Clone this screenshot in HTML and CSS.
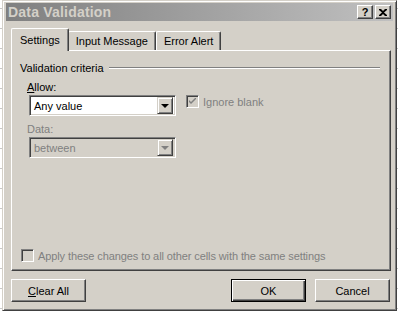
FILE: index.html
```html
<!DOCTYPE html>
<html lang="en">
<head>
    <meta charset="UTF-8">
    <title>Data Validation</title>
    <link rel="stylesheet" href="styles.css">
</head>
<body>
    <div class="dialog">
        <div class="titlebar">
            <span class="title">Data Validation</span>
            <div class="title-buttons">
                <span class="tbtn">?</span>
                <span class="tbtn">
                    <svg width="8" height="7" viewBox="0 0 8 7"><path d="M0 0h2l2 2 2-2h2v1L5 3.5 8 6v1H6L4 5 2 7H0V6l3-2.5L0 1z" fill="#000"/></svg>
                </span>
            </div>
        </div>

        <div class="tabs">
            <div class="tab active">Settings</div>
            <div class="tab">Input Message</div>
            <div class="tab">Error Alert</div>
        </div>

        <div class="panel">
            <div class="group-title">
                <span>Validation criteria</span>
                <span class="etch"></span>
            </div>

            <div class="field">
                <label class="lbl"><u>A</u>llow:</label>
                <div class="row">
                    <div class="combo">
                        <span class="combo-text">Any value</span>
                        <span class="drop"><span class="arrow"></span></span>
                    </div>
                    <div class="check disabled">
                        <span class="box checked">
                            <svg width="7" height="7" viewBox="0 0 7 7"><path d="M0 2l2 2 5-5v2L2 6 0 4z" fill="#808080"/></svg>
                        </span>
                        <span>Ignore blank</span>
                    </div>
                </div>
            </div>

            <div class="field">
                <label class="lbl disabled">Data:</label>
                <div class="combo off">
                    <span class="combo-text">between</span>
                    <span class="drop"><span class="arrow"></span></span>
                </div>
            </div>

            <div class="spacer"></div>

            <div class="check disabled apply">
                <span class="box"></span>
                <span>Apply these changes to all other cells with the same settings</span>
            </div>
        </div>

        <div class="footer">
            <button class="btn"><u>C</u>lear All</button>
            <div class="right-buttons">
                <button class="btn default">OK</button>
                <button class="btn">Cancel</button>
            </div>
        </div>
    </div>
</body>
</html>
```

FILE: styles.css
```css
body {
    margin: 0;
    width: 398px;
    height: 312px;
    background: repeating-linear-gradient(to bottom, #fff 0, #fff 8px, #c8c8c8 8px, #c8c8c8 9px, #fff 9px, #fff 20px);
    font-family: 'Liberation Sans', Arial, sans-serif;
    font-size: 11px;
    color: #000;
    overflow: hidden;
}
.dialog {
    margin-left: 2px;
    width: 395px;
    height: 311px;
    box-sizing: border-box;
    background: #d4d0c8;
    border-top: 1px solid #d4d0c8;
    border-left: 1px solid #d4d0c8;
    border-right: 1px solid #404040;
    border-bottom: 1px solid #404040;
    box-shadow: inset 1px 1px 0 #fff, inset -1px -1px 0 #808080;
    padding: 2px 3px 0 3px;
    display: flex;
    flex-direction: column;
}
.titlebar {
    height: 18px;
    background: linear-gradient(to right, #808080, #c0c0c0);
    display: flex;
    align-items: center;
    justify-content: space-between;
    padding: 0 2px 0 2px;
}
.title {
    color: #d4d0c8;
    font-weight: bold;
    font-size: 14px;
    letter-spacing: 0.2px;
}
.title-buttons {
    display: flex;
    gap: 2px;
}
.tbtn {
    width: 16px;
    height: 14px;
    box-sizing: border-box;
    background: #d4d0c8;
    border-top: 1px solid #fff;
    border-left: 1px solid #fff;
    border-right: 1px solid #404040;
    border-bottom: 1px solid #404040;
    box-shadow: inset -1px -1px 0 #808080;
    display: flex;
    align-items: center;
    justify-content: center;
    font-weight: bold;
    font-size: 11px;
    line-height: 1;
}
.tabs {
    display: flex;
    align-items: flex-end;
    margin: 6px 0 0 5px;
    height: 23px;
}
.tab {
    height: 19px;
    box-sizing: border-box;
    padding: 3px 7px 0 7px;
    border-top: 1px solid #fff;
    border-left: 1px solid #fff;
    border-right: 1px solid #404040;
    box-shadow: inset -1px 0 0 #808080;
    border-radius: 2px 2px 0 0;
    white-space: nowrap;
}
.tab.active {
    padding: 5px 8px 0 8px;
    margin-right: -1px;
    position: relative;
    z-index: 1;
    background: #d4d0c8;
    margin-bottom: -1px;
    height: 23px;
}
.panel {
    margin: 0 0 0 5px;
    width: 380px;
    height: 221px;
    box-sizing: border-box;
    border-top: 1px solid #fff;
    border-left: 1px solid #fff;
    border-right: 1px solid #404040;
    border-bottom: 1px solid #404040;
    box-shadow: inset -1px -1px 0 #808080;
    padding: 10px 8px 8px 8px;
    display: flex;
    flex-direction: column;
}
.group-title {
    display: flex;
    align-items: center;
    gap: 5px;
    height: 13px;
}
.etch {
    flex: 1;
    height: 0;
    border-top: 1px solid #808080;
    border-bottom: 1px solid #fff;
    margin-right: 2px;
}
.field {
    margin: 7px 0 0 9px;
}
.lbl {
    display: block;
    height: 13px;
    margin-bottom: 1px;
    margin-left: -2px;
}
.lbl.disabled,
.disabled {
    color: #808080;
}
.row {
    display: flex;
    align-items: flex-start;
    gap: 10px;
}
.combo {
    width: 147px;
    height: 21px;
    box-sizing: border-box;
    background: #fff;
    border-top: 1px solid #808080;
    border-left: 1px solid #808080;
    border-right: 1px solid #fff;
    border-bottom: 1px solid #fff;
    box-shadow: inset 1px 1px 0 #404040, inset -1px -1px 0 #d4d0c8;
    display: flex;
    align-items: center;
    padding: 2px;
}
.combo.off {
    background: #d4d0c8;
    color: #808080;
}
.combo-text {
    flex: 1;
    padding-left: 2px;
}
.drop {
    width: 16px;
    height: 17px;
    box-sizing: border-box;
    background: #d4d0c8;
    border-top: 1px solid #d4d0c8;
    border-left: 1px solid #d4d0c8;
    border-right: 1px solid #404040;
    border-bottom: 1px solid #404040;
    box-shadow: inset 1px 1px 0 #fff, inset -1px -1px 0 #808080;
    display: flex;
    align-items: center;
    justify-content: center;
}
.arrow {
    width: 0;
    height: 0;
    border-left: 4px solid transparent;
    border-right: 4px solid transparent;
    border-top: 4px solid #000;
    margin-top: 1px;
}
.combo.off .arrow {
    border-top-color: #808080;
}
.check {
    display: flex;
    align-items: center;
    gap: 4px;
}
.box {
    width: 13px;
    height: 13px;
    box-sizing: border-box;
    background: #d4d0c8;
    border-top: 1px solid #808080;
    border-left: 1px solid #808080;
    border-right: 1px solid #fff;
    border-bottom: 1px solid #fff;
    box-shadow: inset 1px 1px 0 #404040, inset -1px -1px 0 #d4d0c8;
    display: flex;
    align-items: center;
    justify-content: center;
}
.spacer {
    flex: 1;
}
.apply {
    margin-left: 1px;
    letter-spacing: -0.1px;
}
.footer {
    display: flex;
    justify-content: space-between;
    margin: 8px 0 0 5px;
    width: 379px;
}
.right-buttons {
    display: flex;
    gap: 9px;
}
.btn {
    width: 75px;
    height: 23px;
    box-sizing: border-box;
    background: #d4d0c8;
    font-family: 'Liberation Sans', Arial, sans-serif;
    font-size: 11px;
    color: #000;
    padding: 0;
    border-top: 1px solid #fff;
    border-left: 1px solid #fff;
    border-right: 1px solid #404040;
    border-bottom: 1px solid #404040;
    box-shadow: inset -1px -1px 0 #808080;
}
.btn.default {
    border: 1px solid #000;
    box-shadow: inset 1px 1px 0 #fff, inset -1px -1px 0 #404040, inset -2px -2px 0 #808080;
}
```
